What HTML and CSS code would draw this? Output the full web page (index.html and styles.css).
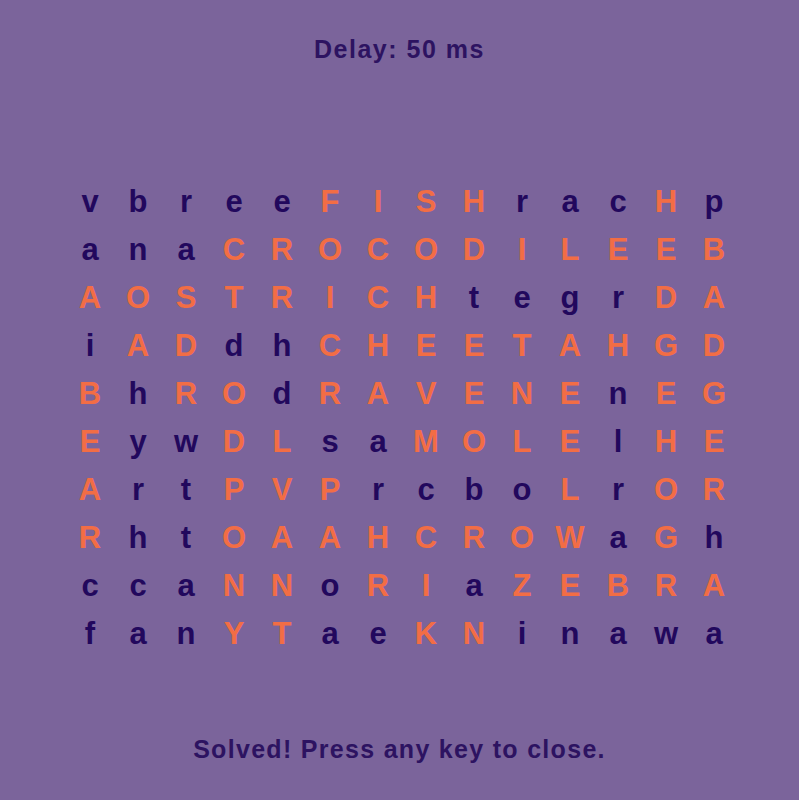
FILE: index.html
```html
<!DOCTYPE html>
<html>
<head>
<meta charset="utf-8">
<link rel="stylesheet" href="styles.css">
</head>
<body>
<div class="screen">
  <div class="status">Delay: 50 ms</div>
  <div class="grid" id="grid"></div>
  <div class="footer">Solved! Press any key to close.</div>
</div>
<script>
var rows = [
"vbreeFISHracHp",
"anaCROCODILEEB",
"AOSTRICHtegrDA",
"iADdhCHEETAHGD",
"BhROdRAVENEnEG",
"EywDLsaMOLElHE",
"ArtPVPrcboLrOR",
"RhtOAAHCROWaGh",
"ccaNNoRIaZEBRA",
"fanYTaeKNinawa"
];
var g = document.getElementById('grid');
rows.forEach(function(r){
  r.split('').forEach(function(c){
    var s = document.createElement('span');
    s.className = 'cell ' + (c === c.toUpperCase() ? 'hit' : 'miss');
    s.textContent = c;
    g.appendChild(s);
  });
});
</script>
</body>
</html>
```
FILE: styles.css
```css
html, body {
  margin: 0;
  padding: 0;
  background: #7b649b;
}
.screen {
  width: 799px;
  height: 800px;
  display: flex;
  flex-direction: column;
  align-items: center;
  font-family: "Liberation Sans", Arial, sans-serif;
  font-weight: bold;
  color: #2d1361;
}
.status {
  margin-top: 35px;
  font-size: 25px;
  line-height: 28px;
  letter-spacing: 1.5px;
}
.grid {
  margin-top: 115px;
  margin-left: 5px;
  display: grid;
  grid-template-columns: repeat(14, 48px);
  grid-auto-rows: 48px;
}
.cell {
  display: flex;
  align-items: center;
  justify-content: center;
  font-size: 31px;
}
.miss { color: #22085d; }
.hit { color: #f26d45; }
.footer {
  margin-top: 77px;
  font-size: 25px;
  line-height: 28px;
  letter-spacing: 1.3px;
}
```
